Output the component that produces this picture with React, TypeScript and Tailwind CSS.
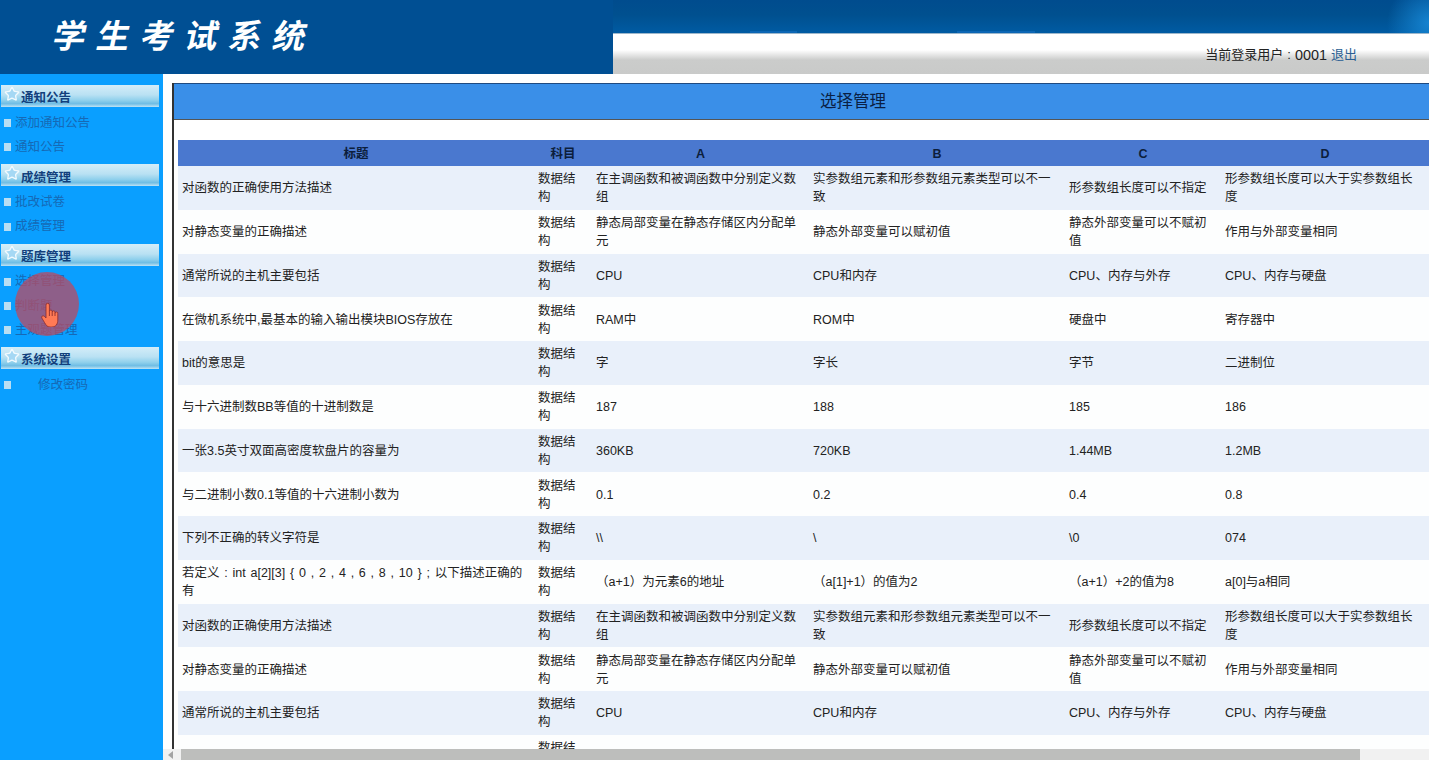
import { Star } from "lucide-react";

const menu = [
  { title: "通知公告", items: ["添加通知公告", "通知公告"] },
  { title: "成绩管理", items: ["批改试卷", "成绩管理"] },
  { title: "题库管理", items: ["选择管理", "判断题", "主观题管理"] },
  { title: "系统设置", items: ["修改密码"] },
];

const first = [
  ["对函数的正确使用方法描述", "在主调函数和被调函数中分别定义数组", "实参数组元素和形参数组元素类型可以不一致", "形参数组长度可以不指定", "形参数组长度可以大于实参数组长度"],
  ["对静态变量的正确描述", "静态局部变量在静态存储区内分配单元", "静态外部变量可以赋初值", "静态外部变量可以不赋初值", "作用与外部变量相同"],
  ["通常所说的主机主要包括", "CPU", "CPU和内存", "CPU、内存与外存", "CPU、内存与硬盘"],
];

const rows: React.ReactNode[][] = [
  ...first,
  ["在微机系统中,最基本的输入输出模块BIOS存放在", "RAM中", "ROM中", "硬盘中", "寄存器中"],
  ["bit的意思是", "字", "字长", "字节", "二进制位"],
  ["与十六进制数BB等值的十进制数是", "187", "188", "185", "186"],
  ["一张3.5英寸双面高密度软盘片的容量为", "360KB", "720KB", "1.44MB", "1.2MB"],
  ["与二进制小数0.1等值的十六进制小数为", "0.1", "0.2", "0.4", "0.8"],
  ["下列不正确的转义字符是", "\\\\", "\\", "\\0", "074"],
  [
    <span className="[word-spacing:1.3px]">{"若定义 : int a[2][3] { 0 , 2 , 4 , 6 , 8 , 10 } ; 以下描述正确的有"}</span>,
    "（a+1）为元素6的地址",
    "（a[1]+1）的值为2",
    "（a+1）+2的值为8",
    "a[0]与a相同",
  ],
  ...first,
  ["", "", "", "", ""],
];

function Sidebar() {
  return (
    <aside className="relative w-[163px] shrink-0 bg-[#0a9fff] pt-[11px]">
      {menu.map((group) => (
        <div key={group.title} className="mb-[5px]">
          <div className="relative mx-px flex h-[22px] w-[158px] items-center pl-5 pt-[5px] text-[12.5px] font-bold text-[#123f7c] bg-[linear-gradient(#d4edf8_0%,#b9e1f3_45%,#8fd0ec_70%,#6fbde4_85%,#bfe3f4_100%)]">
            <Star className="absolute left-[3px] top-px h-4 w-4 fill-[#a5d8f4] text-[#f2fafe]" strokeWidth={2} />
            {group.title}
          </div>
          <ul className="mt-1">
            {group.items.map((item) => (
              <li key={item} className="flex h-[24.2px] items-center text-[12.5px] text-[#1669b5]">
                <span className="ml-1 mr-1 h-2 w-[7px] bg-[#b9def3]" />
                <span className={item === "修改密码" ? "ml-[23px]" : ""}>{item}</span>
              </li>
            ))}
          </ul>
        </div>
      ))}
      {/* click marker from the screen recording */}
      <div className="absolute left-[15px] top-[198px] h-[64px] w-[64px] rounded-full bg-[#bb4a62]/75" />
      <svg className="absolute left-[41px] top-[229px] h-6 w-[18px]" viewBox="0 0 18 24">
        <path
          d="M5 2a1.7 1.7 0 0 1 3.4 0v6.5a1.4 1.4 0 0 1 2.8 0v.5a1.4 1.4 0 0 1 2.8 .5v.6a1.4 1.4 0 0 1 2.8 .6V17c0 4-2 7-6 7H9c-3 0-4-2-5.5-4.5L.8 15c-.8-1.5 1-3 2.5-1.8L5 15z"
          fill="#ff7a55"
          stroke="#8a2c2c"
          strokeWidth="0.8"
        />
        <path d="M8.4 8.5V13M11.2 9V13M14 10V13" stroke="#8a2c2c" strokeWidth="0.9" fill="none" />
      </svg>
    </aside>
  );
}

function DataTable() {
  return (
    <table className="w-[1251px] table-fixed border-collapse text-[12.5px] leading-[18px] text-[#222]">
      <colgroup>
        <col className="w-[356px]" />
        <col className="w-[58px]" />
        <col className="w-[217px]" />
        <col className="w-[256px]" />
        <col className="w-[156px]" />
        <col className="w-[208px]" />
      </colgroup>
      <thead>
        <tr className="h-[26px] bg-[#4a78cf] text-[#0c1e3c]">
          {["标题", "科目", "A", "B", "C", "D"].map((h) => (
            <th key={h} className="pt-px text-center font-bold">{h}</th>
          ))}
        </tr>
      </thead>
      <tbody>
        {rows.map((r, i) => (
          <tr key={i} className={i % 2 === 0 ? "bg-[#e9f0fa]" : "bg-[#fdfefe]"}>
            <td className="h-[43.75px] px-1 pt-px">{r[0]}</td>
            <td className="pl-1 pr-[6px] pt-px">数据结构</td>
            <td className="px-1 pt-px">{r[1]}</td>
            <td className="px-1 pt-px">{r[2]}</td>
            <td className="px-1 pt-px">{r[3]}</td>
            <td className="pl-1 pr-[6px] pt-px">{r[4]}</td>
          </tr>
        ))}
      </tbody>
    </table>
  );
}

export default function App() {
  return (
    <div className="flex h-[760px] w-[1429px] flex-col overflow-hidden bg-white [font-family:'Liberation_Sans','Noto_Sans_CJK_SC',sans-serif]">
      <header className="flex h-[74px] shrink-0 bg-[#004f93]">
        <div className="w-[613px] shrink-0 pl-[54px] pt-[13px]">
          <span className="inline-block -skew-x-12 text-[33px] font-bold leading-[42px] tracking-[11px] text-white [font-family:'Noto_Sans_CJK_SC',sans-serif]">
            学生考试系统
          </span>
        </div>
        <div className="flex flex-1 flex-col">
          <div className="flex h-[33px] items-end bg-[radial-gradient(circle_at_100%_70%,#1583d0_0,transparent_42px),linear-gradient(#004c8e_0%,#00508f_45%,#005ba3_100%)]">
            <span className="ml-[137px] h-[2px] w-[47px] bg-[#0c66b4]" />
            <span className="ml-[160px] h-[2px] w-[78px] bg-[#0c66b4]" />
          </div>
          <div className="flex flex-1 items-start justify-end border-t border-[#9db7cb] pr-[72px] pt-3 text-[13px] leading-[18px] text-[#222] bg-[linear-gradient(#ffffff_0%,#ffffff_40%,#cbcccb_65%,#c9cac9_100%)]">
            当前登录用户<span className="mx-1">:</span><span className="text-[14.4px]">0001</span>
            <span className="ml-1 text-[#2a5f94]">退出</span>
          </div>
        </div>
      </header>
      <div className="flex min-h-0 flex-1">
        <Sidebar />
        <div className="flex min-w-0 flex-1 flex-col">
          <main className="min-h-0 flex-1 overflow-hidden pl-[9px] pt-[9px]">
            <div className="w-[1360px] border-l-2 border-[#333]">
              <div className="flex h-[37px] items-center justify-center border-y border-t-[#1f4a80] border-b-[#555] bg-[#3a8fe8] text-[16.5px] text-[#0a1f44]">
                选择管理
              </div>
              <div className="pl-1 pt-5">
                <DataTable />
              </div>
            </div>
          </main>
          <div className="flex h-[11px] shrink-0 items-center bg-[#f1f1f1]">
            <span className="ml-[5px] mr-[6px] h-0 w-0 border-y-[4px] border-r-[5px] border-y-transparent border-r-[#a3a3a3]" />
            <div className="ml-[2px] h-full w-[1179px] bg-[#bdbebc]" />
          </div>
        </div>
      </div>
    </div>
  );
}
